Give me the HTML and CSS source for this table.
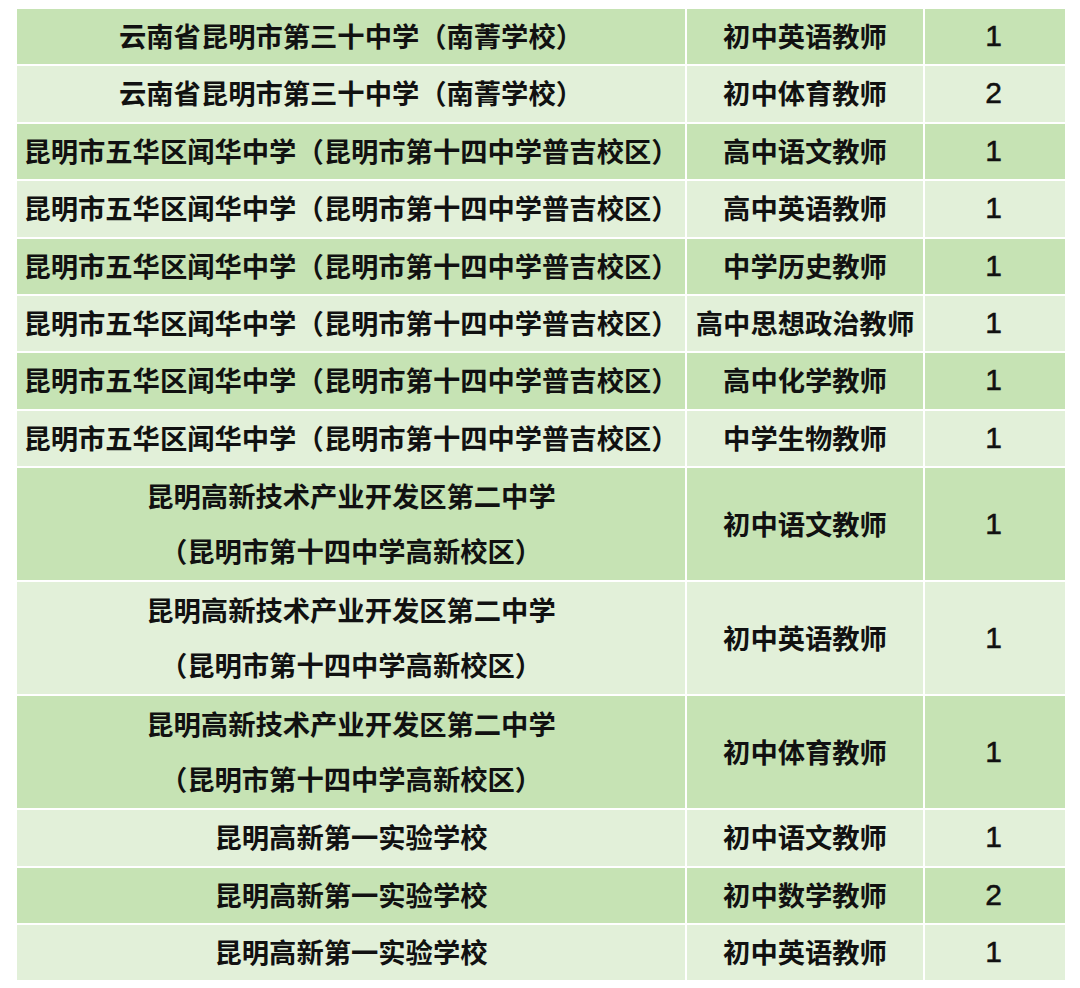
FILE: index.html
```html
<!DOCTYPE html>
<html lang="zh-CN">
<head>
<meta charset="utf-8">
<title>招聘岗位</title>
<link rel="stylesheet" href="styles.css">
</head>
<body>
<table class="jobs">
  <colgroup><col class="c-school"><col class="c-post"><col class="c-num"></colgroup>
  <tbody>
    <tr class="dark"><td>云南省昆明市第三十中学（南菁学校）</td><td>初中英语教师</td><td class="num">1</td></tr>
    <tr class="light"><td>云南省昆明市第三十中学（南菁学校）</td><td>初中体育教师</td><td class="num">2</td></tr>
    <tr class="dark"><td>昆明市五华区闻华中学（昆明市第十四中学普吉校区）</td><td>高中语文教师</td><td class="num">1</td></tr>
    <tr class="light"><td>昆明市五华区闻华中学（昆明市第十四中学普吉校区）</td><td>高中英语教师</td><td class="num">1</td></tr>
    <tr class="dark"><td>昆明市五华区闻华中学（昆明市第十四中学普吉校区）</td><td>中学历史教师</td><td class="num">1</td></tr>
    <tr class="light"><td>昆明市五华区闻华中学（昆明市第十四中学普吉校区）</td><td>高中思想政治教师</td><td class="num">1</td></tr>
    <tr class="dark"><td>昆明市五华区闻华中学（昆明市第十四中学普吉校区）</td><td>高中化学教师</td><td class="num">1</td></tr>
    <tr class="light"><td>昆明市五华区闻华中学（昆明市第十四中学普吉校区）</td><td>中学生物教师</td><td class="num">1</td></tr>
    <tr class="dark tall"><td>昆明高新技术产业开发区第二中学<br>（昆明市第十四中学高新校区）</td><td>初中语文教师</td><td class="num">1</td></tr>
    <tr class="light tall"><td>昆明高新技术产业开发区第二中学<br>（昆明市第十四中学高新校区）</td><td>初中英语教师</td><td class="num">1</td></tr>
    <tr class="dark tall"><td>昆明高新技术产业开发区第二中学<br>（昆明市第十四中学高新校区）</td><td>初中体育教师</td><td class="num">1</td></tr>
    <tr class="light"><td>昆明高新第一实验学校</td><td>初中语文教师</td><td class="num">1</td></tr>
    <tr class="dark"><td>昆明高新第一实验学校</td><td>初中数学教师</td><td class="num">2</td></tr>
    <tr class="light"><td>昆明高新第一实验学校</td><td>初中英语教师</td><td class="num">1</td></tr>
  </tbody>
</table>
</body>
</html>
```

FILE: styles.css
```css
html, body {
  margin: 0;
  padding: 0;
  background: #ffffff;
}
body {
  padding: 7px 16px 0 15px;
}
.jobs {
  border-collapse: collapse;
  table-layout: fixed;
  width: 1050px;
  font-family: "Noto Sans CJK SC", "Noto Sans", sans-serif;
  font-size: 27.3px;
  font-weight: 700;
  color: #111111;
}
.c-school { width: 670px; }
.c-post { width: 238px; }
.c-num { width: 142px; }
.jobs td {
  border: 2px solid #ffffff;
  text-align: center;
  vertical-align: middle;
  padding: 0 0 2px 0;
  height: 53.4px;
  line-height: 53.4px;
  white-space: nowrap;
}
.jobs tr.tall td {
  height: 110px;
  line-height: 55px;
}
.jobs td.num {
  font-family: "Liberation Sans", Arial, sans-serif;
  font-size: 30px;
  font-weight: 400;
  padding-right: 3px;
  -webkit-text-stroke: 0.5px #111111;
}
.dark td { background: #c6e3b4; }
.light td { background: #e2f0d9; }
```
